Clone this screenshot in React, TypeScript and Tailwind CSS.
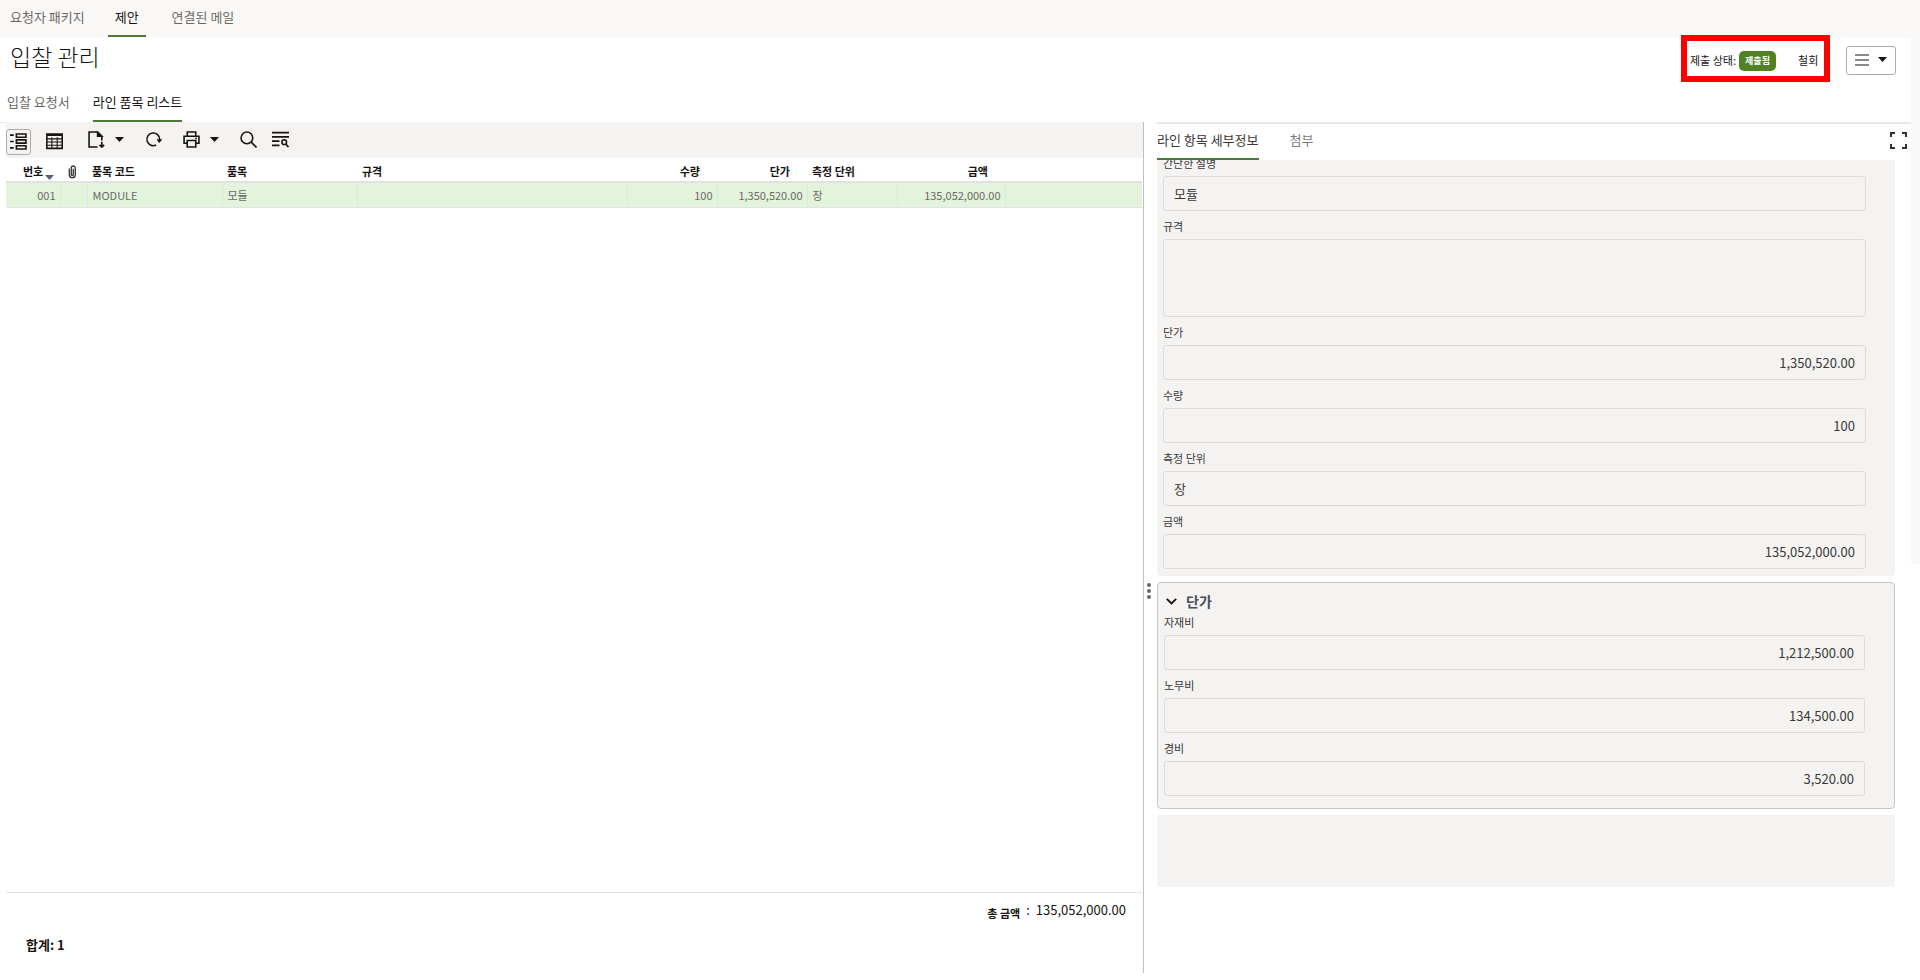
import type { ReactNode } from "react";

const PACKAGE_TABS = ["요청자 패키지", "제안", "연결된 메일"];

interface Column {
  label: string;
  width: string;
  value: string;
  numeric?: boolean;
}

const COLUMNS: Column[] = [
  { label: "품목 코드", width: "w-[135px]", value: "MODULE" },
  { label: "품목", width: "w-[135px]", value: "모듈" },
  { label: "규격", width: "w-[270px]", value: "" },
  { label: "수량", width: "w-[90px]", value: "100", numeric: true },
  { label: "단가", width: "w-[90px]", value: "1,350,520.00", numeric: true },
  { label: "측정 단위", width: "w-[90px]", value: "장" },
  { label: "금액", width: "w-[108px]", value: "135,052,000.00", numeric: true },
];

export default function App() {
  return (
    <div className="min-h-screen bg-white font-['Noto_Sans_CJK_KR','Noto_Sans',sans-serif] text-[#161513]">
      <nav className="flex h-[38px] bg-[#faf9f8] pl-[3px] text-[13px] leading-5">
        {PACKAGE_TABS.map((tab) => (
          <a
            key={tab}
            href="#"
            className={
              tab === "제안"
                ? "mr-[19px] ml-4 h-[37px] border-b-2 border-[#4d7a36] px-[7px] pt-[7px]"
                : "px-[7px] pt-[7px] text-[#6b6966]"
            }
          >
            {tab}
          </a>
        ))}
      </nav>
      <div className="flex">
        <main className="min-w-0 flex-1">
          <PageHeader />
          <div className="grid grid-cols-[1143fr_14px_754fr]">
            <LineItems />
            <div className="mb-1 flex flex-col items-center gap-[2px] border-l border-[#bfbfbf] pt-[461px] pr-[3px]">
              <span className="size-1 rounded-full bg-[#6b6966]" />
              <span className="size-1 rounded-full bg-[#6b6966]" />
              <span className="size-1 rounded-full bg-[#6b6966]" />
            </div>
            <LineDetails />
          </div>
        </main>
        <div className="h-[526px] w-[9px] bg-[#faf9f8]" />
      </div>
    </div>
  );
}

function PageHeader() {
  return (
    <header>
      <div className="flex h-[46px] items-start pr-[15px] pl-[10px]">
        <h1 className="text-[23px] leading-9 font-light">입찰 관리</h1>
        <div className="relative -mt-[3px] ml-auto flex h-[47px] w-[149px] items-center border-[6px] border-[#ff0000] pt-1 pl-[3px] text-[11px]">
          <span>제출 상태:</span>
          <span className="ml-[3px] flex h-5 w-[37px] items-center justify-center rounded-[5px] bg-[#508223] text-[9px] font-bold text-white">
            제출됨
          </span>
          <button type="button" className="ml-[22px]">
            철회
          </button>
        </div>
        <button
          type="button"
          aria-label="메뉴"
          className="mt-2 ml-4 flex h-[29px] w-[50px] items-center gap-[9px] rounded-[3px] border border-[#aeacaa] pb-[2px] pl-2"
        >
          <svg width="14" height="12" viewBox="0 0 14 12" stroke="#8b8987" strokeWidth="2">
            <path d="M0 1h14M0 6h14M0 11h14" />
          </svg>
          <Caret />
        </button>
      </div>
      <nav className="flex h-[38px] gap-[23px] pl-[7px] text-[13px] leading-5">
        <a href="#" className="pt-2 text-[#6b6966]">
          입찰 요청서
        </a>
        <a href="#" className="border-b-2 border-[#4d7a36] pt-2">
          라인 품목 리스트
        </a>
      </nav>
    </header>
  );
}

function LineItems() {
  return (
    <section className="flex min-w-0 flex-col">
      <div className="flex">
        <div className="w-[6px] border-t border-[#e2e7ec]" />
        <Toolbar />
      </div>
      <div className="pr-[1px] pl-[6px]">
        <table className="w-full table-fixed text-[11px]">
          <thead>
            <tr className="h-6 border-b-2 border-[#e2e2e2] text-left">
              <th className="w-[54px] pt-1 pl-[17px]">
                <span className="flex items-center gap-[2px]">
                  번호
                  <svg width="9" height="5" viewBox="0 0 9 5" fill="#55606e" className="mt-3">
                    <path d="M0 0h9L4.500 5z" />
                  </svg>
                </span>
              </th>
              <th className="w-[27px] pt-1 pl-2" aria-label="첨부">
                <svg width="9" height="14" viewBox="0 0 9 14" fill="none" stroke="#33302e" strokeWidth="1.300">
                  <path d="M1.300 3.500v6.200a3 3 0 0 0 6 0V3a2 2 0 0 0-4 0v6.500a1 1 0 0 0 2 0V3.800" />
                </svg>
              </th>
              {COLUMNS.map((col) => (
                <th
                  key={col.label}
                  className={`${col.width} pt-1 ${col.numeric ? "pr-[17px] text-right" : "pl-[5px]"}`}
                >
                  {col.label}
                </th>
              ))}
              <th />
            </tr>
          </thead>
          <tbody>
            <tr className="h-[25px] border-b border-[#e2e2e2] bg-[#e4f4dc] text-[#6b6966]">
              <td className="border-r border-[#dfe5df] pr-1 text-right">001</td>
              <td className="border-r border-[#dfe5df]" />
              {COLUMNS.map((col) => (
                <td
                  key={col.label}
                  className={`border-r border-[#dfe5df] ${col.numeric ? "pr-1 text-right" : "pl-[5px]"}`}
                >
                  {col.value}
                </td>
              ))}
              <td />
            </tr>
          </tbody>
        </table>
        <footer className="mt-[684px] border-t border-[#e2e2e2] pb-[22px]">
          <div className="flex items-start justify-end gap-[6px] pt-[7px] pr-4 text-[13px] leading-5">
            <strong className="pt-[3px] text-[11px] leading-5">총 금액</strong>
            <span>:</span>
            <span>135,052,000.00</span>
          </div>
          <p className="mt-3 pl-5 text-[13px] leading-5 font-bold">합계: 1</p>
        </footer>
      </div>
    </section>
  );
}

function Toolbar() {
  return (
    <div className="flex h-9 flex-1 items-center bg-[#f4f3f2] pb-[2px]">
      <button
        type="button"
        aria-label="목록 보기"
        className="mt-[5px] flex h-[26px] w-[25px] items-center justify-center rounded-[3px] border border-[#aeacaa]"
      >
        <Icon>
          <path d="M6 1h9v3H6zM6 6.500h9v3H6zM6 12h9v3H6zM0 2h3.500M0 8h3.500M0 14h3.500" />
        </Icon>
      </button>
      <button type="button" aria-label="표 보기" className="mt-[5px] ml-[15px]">
        <Icon>
          <path d="M.8 1h14.500v13.500H.8zM.8 2h14.500" />
          <path d="M.8 5.500h14.500M.8 8.500h14.500M.8 11.500h14.500M5.500 4v10.500M10.500 4v10.500" strokeWidth="1" />
        </Icon>
      </button>
      <button type="button" aria-label="내보내기" className="ml-[25px] flex items-center gap-[10px]">
        <Icon>
          <path d="M9 15H1V1h8l4 4v4M13 10v5M10.800 13l2.200 2.200 2.200-2.200" />
          <path d="M9 1v4h4z" fill="currentColor" />
        </Icon>
        <Caret />
      </button>
      <button type="button" aria-label="새로고침" className="ml-[21px]">
        <Icon>
          <path d="M10.500 13.200a6 6 0 1 1 3.300-5.200v1" />
          <path d="M10.800 7.800h5.400l-2.700 3.400z" fill="currentColor" stroke="none" />
        </Icon>
      </button>
      <button type="button" aria-label="인쇄" className="ml-[21px] flex items-center gap-[10px]">
        <Icon>
          <path d="M4 5V1h8v4M4 11.500H1V5h14v6.500h-3M4 9h8v6H4zM11.500 7h1.500" />
        </Icon>
        <Caret />
      </button>
      <button type="button" aria-label="검색" className="ml-[21px]">
        <Icon>
          <circle cx="6.500" cy="6.500" r="5.500" />
          <path d="M10.500 10.500l5 5" />
        </Icon>
      </button>
      <button type="button" aria-label="필터" className="ml-[15px]">
        <Icon>
          <path d="M0 1.500h16M0 5.500h16M0 9.500h7M0 13.500h7" />
          <circle cx="11.500" cy="10.500" r="2.200" />
          <path d="M13 12.200l2.500 3" />
        </Icon>
      </button>
    </div>
  );
}

function LineDetails() {
  return (
    <section className="min-w-0">
      <div className="flex h-[38px] border-t-2 border-[#e4e9ed] text-[13px] leading-5">
        <a href="#" className="border-b-2 border-[#4d7a36] pt-[6px] text-[#3a3836]">
          라인 항목 세부정보
        </a>
        <a href="#" className="ml-[31px] pt-[6px] text-[#7d7b78]">
          첨부
        </a>
        <button type="button" aria-label="전체 화면" className="mr-1 ml-auto pb-1">
          <svg width="17" height="17" viewBox="0 0 17 17" fill="none" stroke="#33302e" strokeWidth="2">
            <path d="M1 5V1h4M12 1h4v4M16 12v4h-4M5 16H1v-4" />
          </svg>
        </button>
      </div>
      <div className="flex flex-col gap-[6px] pr-4">
        <div className="overflow-hidden rounded-b-[4px] bg-[#f4f3f2] pr-[29px] pb-[7px] pl-[6px]">
          <div className="-mt-1 flex flex-col gap-2">
            <Field id="description" label="간단한 설명" value="모듈" />
            <Field id="spec" label="규격" value="" multiline />
            <Field id="price" label="단가" value="1,350,520.00" numeric />
            <Field id="quantity" label="수량" value="100" numeric />
            <Field id="uom" label="측정 단위" value="장" />
            <Field id="amount" label="금액" value="135,052,000.00" numeric />
          </div>
        </div>
        <div className="rounded-[4px] border border-[#c4c6c8] bg-[#f4f3f2] pr-[29px] pb-3 pl-[6px]">
          <h2>
            <button
              type="button"
              className="flex h-8 items-center gap-[9px] pt-1 pl-[2px] text-sm font-bold text-[#474f58]"
            >
              <svg width="11" height="7" viewBox="0 0 11 7" fill="none" stroke="#161513" strokeWidth="1.800">
                <path d="M.8.8l4.700 4.700L10.200.8" />
              </svg>
              단가
            </button>
          </h2>
          <div className="flex flex-col gap-2">
            <Field id="material" label="자재비" value="1,212,500.00" numeric />
            <Field id="labor" label="노무비" value="134,500.00" numeric />
            <Field id="expense" label="경비" value="3,520.00" numeric />
          </div>
        </div>
        <div className="h-[72px] rounded-[4px] bg-[#f4f3f2]" />
      </div>
    </section>
  );
}

interface FieldProps {
  id: string;
  label: string;
  value: string;
  numeric?: boolean;
  multiline?: boolean;
}

function Field({ id, label, value, numeric, multiline }: FieldProps) {
  return (
    <div className="flex flex-col gap-[6px] text-[#3a3836]">
      <label htmlFor={id} className="text-[11px] leading-[14px]">
        {label}
      </label>
      {multiline ? (
        <textarea
          id={id}
          readOnly
          defaultValue={value}
          className="h-[78px] resize-none rounded-[3px] border border-[#dddcdb] px-[10px] text-[13px]"
        />
      ) : (
        <input
          id={id}
          readOnly
          defaultValue={value}
          className={`h-[35px] rounded-[3px] border border-[#dddcdb] px-[10px] text-[13px] ${numeric ? "text-right" : ""}`}
        />
      )}
    </div>
  );
}

function Icon({ children }: { children: ReactNode }) {
  return (
    <svg width="17" height="17" viewBox="0 0 16 16" fill="none" stroke="currentColor" strokeWidth="1.500">
      {children}
    </svg>
  );
}

function Caret() {
  return (
    <svg width="9" height="5" viewBox="0 0 9 5" fill="currentColor">
      <path d="M0 0h9L4.500 5z" />
    </svg>
  );
}
